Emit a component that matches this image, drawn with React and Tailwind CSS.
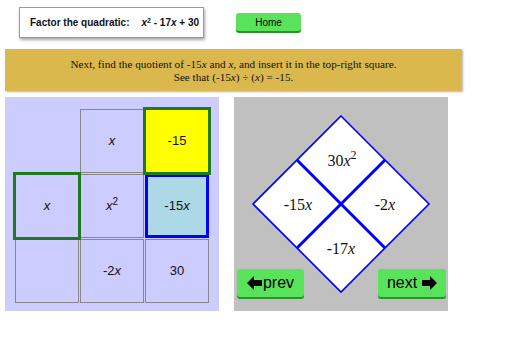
import React from "react";

const cell = "flex items-center justify-center w-[64px] h-[64px] text-[13px]";

const Grid = () => (
    <div className="grid grid-cols-[64px_64px_64px] grid-rows-[64px_64px_64px] gap-[1px]">
        <div />
        <div className={`${cell} border border-[#888]`}><i>x</i></div>
        <div className={`${cell} -m-[2px] w-[68px] h-[68px] bg-[#ffff00] border-[3px] border-[#1f7a1f] z-10`}>-15</div>

        <div className={`${cell} -m-[2px] w-[68px] h-[68px] border-[3px] border-[#1f7a1f] z-10`}><i>x</i></div>
        <div className={`${cell} border border-[#888]`}>
            <span><i>x</i><sup className="text-[10px]">2</sup></span>
        </div>
        <div className={`${cell} bg-[#add8e6] border-[3px] border-[#0000ff]`}>-15<i>x</i></div>

        <div className={`${cell} border border-[#888]`} />
        <div className={`${cell} border border-[#888]`}>-2<i>x</i></div>
        <div className={`${cell} border border-[#888]`}>30</div>
    </div>
);

// thick block arrow, like the old font-awesome one
const Arrow = ({ left }) => (
    <svg width="15" height="14" viewBox="0 0 15 14" className={left ? "" : "rotate-180"}>
        <polygon points="0,7 7,0 7,4 15,4 15,10 7,10 7,14" fill="#000" />
    </svg>
);

const GreenButton = ({ children, className = "" }) => (
    <button
        className={`bg-[#59e35a] rounded-[3px] shadow-[0_2px_0_#2f8f2f] text-black ${className}`}
    >
        {children}
    </button>
);

const Diamond = () => (
    <svg className="absolute inset-0" width="214" height="214" viewBox="0 0 214 214">
        <polygon points="107,19 195,107 107,195 19,107" fill="#fff" stroke="#0000ff" strokeWidth="1.6" />
        <line x1="63" y1="63" x2="151" y2="151" stroke="#0000ff" strokeWidth="3" />
        <line x1="151" y1="63" x2="63" y2="151" stroke="#0000ff" strokeWidth="3" />
        <g fontFamily="'Liberation Serif', serif" fontSize="16" textAnchor="middle" fill="#111">
            <text x="108" y="69">
                30<tspan fontStyle="italic">x</tspan>
                <tspan fontSize="12" dy="-7">2</tspan>
            </text>
            <text x="64" y="113">-15<tspan fontStyle="italic">x</tspan></text>
            <text x="151" y="113">-2<tspan fontStyle="italic">x</tspan></text>
            <text x="107" y="157">-17<tspan fontStyle="italic">x</tspan></text>
        </g>
    </svg>
);

export default function App() {
    return (
        <div className="w-[512px] h-[355px] bg-white font-['Liberation_Sans',Arial,sans-serif] text-[#111]">
            {/* Header */}
            <div className="flex items-start pt-[7px] pl-[19px]">
                <div className="w-[185px] h-[31px] bg-white border border-[#999] shadow-[1px_2px_3px_rgba(0,0,0,0.35)] flex items-center pl-[10px] text-[10px] font-bold">
                    <span>Factor the quadratic:</span>
                    <span className="ml-[12px]">
                        <i>x</i><sup className="text-[7px]">2</sup> - 17<i>x</i> + 30
                    </span>
                </div>
                <GreenButton className="ml-[32px] mt-[6px] w-[65px] h-[18px] text-[10px]">Home</GreenButton>
            </div>

            {/* Instruction banner */}
            <div className="ml-[5px] mt-[11px] w-[457px] h-[42px] pt-[1px] bg-[#dbb84e] shadow-[1px_1px_2px_rgba(0,0,0,0.3)] flex flex-col items-center justify-center font-['Liberation_Serif',serif] text-[11.2px] leading-[13px]">
                <p>Next, find the quotient of -15<i>x</i> and <i>x</i>, and insert it in the top-right square.</p>
                <p>See that (-15<i>x</i>) ÷ (<i>x</i>) = -15.</p>
            </div>

            {/* Panels */}
            <div className="flex gap-[15px] ml-[5px] mt-[6px]">
                <div className="w-[214px] h-[214px] bg-[#ccccff] pt-[12px] pl-[10px]">
                    <Grid />
                </div>
                <div className="relative w-[214px] h-[214px] bg-[#c0c0c0] flex flex-col">
                    <Diamond />
                    <div className="relative mt-auto mb-[14px] flex justify-between pl-[3px] pr-[2px]">
                        <GreenButton className="w-[67px] h-[28px] flex items-center justify-center gap-[1px] text-[16px]">
                            <Arrow left />prev
                        </GreenButton>
                        <GreenButton className="w-[68px] h-[28px] flex items-center justify-center gap-[5px] text-[16px]">
                            next<Arrow />
                        </GreenButton>
                    </div>
                </div>
            </div>
        </div>
    );
}
